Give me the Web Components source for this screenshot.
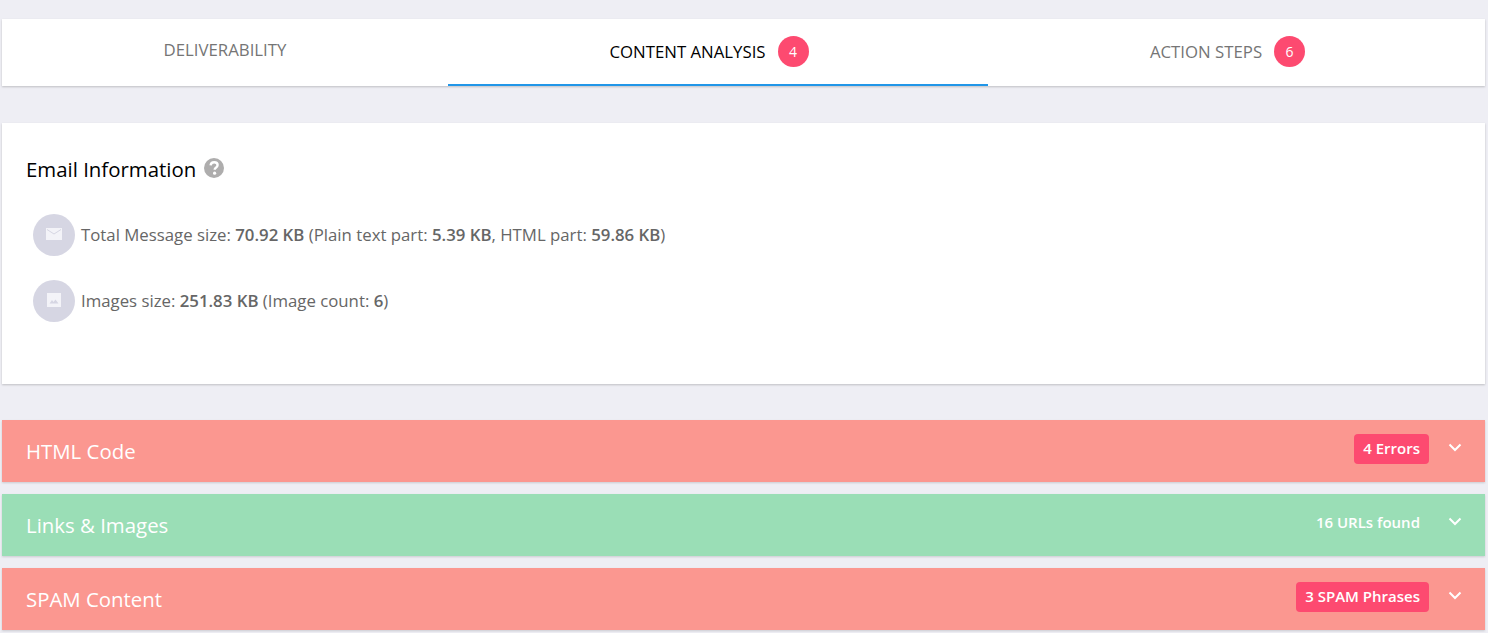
<!DOCTYPE html>
<html>
<head>
<meta charset="utf-8">
<title>Content Analysis</title>
<style>
html, body { margin: 0; height: 633px; overflow: hidden; }
body {
  background: #eeeef4;
  font-family: "Open Sans", sans-serif;
  padding: 19px 3px 0 2px;
  box-sizing: border-box;
}
</style>
</head>
<body>
<report-tabs>
  <report-tab>DELIVERABILITY</report-tab>
  <report-tab active count="4">CONTENT ANALYSIS</report-tab>
  <report-tab count="6">ACTION STEPS</report-tab>
</report-tabs>

<info-card heading="Email Information">
  <info-row icon="mail">Total Message size: <b>70.92 KB</b> (Plain text part: <b>5.39 KB</b>, HTML part: <b>59.86 KB</b>)</info-row>
  <info-row icon="image">Images size: <b>251.83 KB</b> (Image count: <b>6</b>)</info-row>
</info-card>

<div style="display:flex;flex-direction:column;gap:12px">
  <section-bar status="bad" label="HTML Code" badge="4 Errors"></section-bar>
  <section-bar status="good" label="Links &amp; Images" note="16 URLs found"></section-bar>
  <section-bar status="bad" label="SPAM Content" badge="3 SPAM Phrases"></section-bar>
</div>

<script>
class ReportTabs extends HTMLElement {
  constructor() {
    super();
    this.attachShadow({ mode: "open" });
    this.shadowRoot.innerHTML = `
<style>
:host {
  display: grid;
  grid-template-columns: 446px 540px 497px;
  height: 67px;
  background: #fff;
  box-shadow: 0 1px 2px rgba(0,0,0,.2);
  margin-bottom: 37px;
}
</style>
<slot></slot>`;
  }
}

class ReportTab extends HTMLElement {
  constructor() {
    super();
    this.attachShadow({ mode: "open" });
    const count = this.getAttribute("count");
    this.shadowRoot.innerHTML = `
<style>
:host {
  display: flex;
  align-items: center;
  justify-content: center;
  box-sizing: border-box;
  height: 67px;
  padding-bottom: 2px;
  font-size: 16.8px;
  color: #757575;
}
:host([active]) {
  color: #000;
  border-bottom: 2px solid #2196e8;
  padding-bottom: 0;
}
:host(:not([count])) { padding-bottom: 6px; }
.count {
  width: 31px;
  height: 31px;
  margin: 0 18px 0 12px;
  border-radius: 50%;
  background: #fd4a70;
  color: #fff;
  font-size: 14px;
  display: flex;
  align-items: center;
  justify-content: center;
}
</style>
<slot></slot>${count ? `<span class="count">${count}</span>` : ""}`;
  }
}

class InfoCard extends HTMLElement {
  constructor() {
    super();
    this.attachShadow({ mode: "open" });
    this.shadowRoot.innerHTML = `
<style>
:host {
  display: block;
  box-sizing: border-box;
  height: 261px;
  margin-bottom: 36px;
  padding: 30px 24px 0;
  background: #fff;
  box-shadow: 0 1px 2px rgba(0,0,0,.2);
}
h2 {
  margin: 0 0 28px;
  display: flex;
  align-items: center;
  gap: 8px;
  height: 33px;
  font-size: 20.4px;
  font-weight: 400;
  color: #000;
}
#title { padding-bottom: 2px; }
.rows { display: flex; flex-direction: column; gap: 24px; padding-left: 7px; }
svg { display: block; margin-top: -3px; }
</style>
<h2><span id="title"></span>
  <svg width="20" height="20" viewBox="0 0 20 20">
    <circle cx="10" cy="10" r="10" fill="#aeadad"/>
    <path d="M6.6 7.4C6.8 5.3 8.2 4.2 10.2 4.2c2 0 3.4 1.1 3.4 2.9 0 1.3-.8 2-1.7 2.6-1 .6-1.2 1-1.2 2.1" fill="none" stroke="#fff" stroke-width="2.4"/>
    <circle cx="10.6" cy="15.2" r="1.6" fill="#fff"/>
  </svg>
</h2>
<div class="rows"><slot></slot></div>`;
    this.shadowRoot.querySelector("#title").textContent = this.getAttribute("heading");
  }
}

const rowIcons = {
  mail: `<svg width="16" height="12" viewBox="0 0 16 12"><path d="M0 0h16v12H0z" fill="#f3f3f8"/><path d="M1 1.5l7 4.5 7-4.5" fill="none" stroke="#d6d6e3"/></svg>`,
  image: `<svg width="14" height="14" viewBox="0 0 14 14"><path d="M0 0h14v14H0z" fill="#f3f3f8"/><path d="M2.5 10.5l2.5-3.5 1.5 2L8.5 6.5l3 4z" fill="#d6d6e3"/></svg>`
};

class InfoRow extends HTMLElement {
  constructor() {
    super();
    this.attachShadow({ mode: "open" });
    this.shadowRoot.innerHTML = `
<style>
:host {
  display: flex;
  align-items: center;
  gap: 6px;
  height: 42px;
  font-size: 16.8px;
  color: #666;
}
.icon {
  flex: none;
  width: 42px;
  height: 42px;
  border-radius: 50%;
  background: #d6d6e3;
  display: flex;
  align-items: center;
  justify-content: center;
}
svg { display: block; margin-top: -2px; }
.text { padding-bottom: 2px; }
::slotted(b) { font-weight: 600; }
</style>
<span class="icon">${rowIcons[this.getAttribute("icon")]}</span>
<span class="text"><slot></slot></span>`;
  }
}

class SectionBar extends HTMLElement {
  constructor() {
    super();
    this.attachShadow({ mode: "open" });
    const badge = this.getAttribute("badge");
    const note = this.getAttribute("note");
    this.shadowRoot.innerHTML = `
<style>
:host {
  display: flex;
  align-items: center;
  box-sizing: border-box;
  height: 62px;
  padding: 0 23px 0 24px;
  color: #fff;
  background: #fb9790;
  box-shadow: 0 1px 2px rgba(0,0,0,.15);
}
:host([status="good"]) { background: #9adeb6; }
.label { flex: 1; font-size: 20.4px; }
.tag {
  margin-top: -5px;
  padding: 0 9px;
  height: 30px;
  line-height: 28px;
  border-radius: 4px;
  font-size: 15px;
  font-weight: 600;
}
.badge { background: #fd4a70; }
svg { margin: -7px 0 0 19px; display: block; }
</style>
<span class="label"></span>
${badge ? `<span class="tag badge">${badge}</span>` : ""}
${note ? `<span class="tag">${note}</span>` : ""}
<svg width="14" height="9" viewBox="0 0 14 9"><path d="M1.5 1.5L7 7l5.5-5.5" fill="none" stroke="#fff" stroke-width="2"/></svg>`;
    this.shadowRoot.querySelector(".label").textContent = this.getAttribute("label");
  }
}

customElements.define("report-tabs", ReportTabs);
customElements.define("report-tab", ReportTab);
customElements.define("info-card", InfoCard);
customElements.define("info-row", InfoRow);
customElements.define("section-bar", SectionBar);
</script>
</body>
</html>
